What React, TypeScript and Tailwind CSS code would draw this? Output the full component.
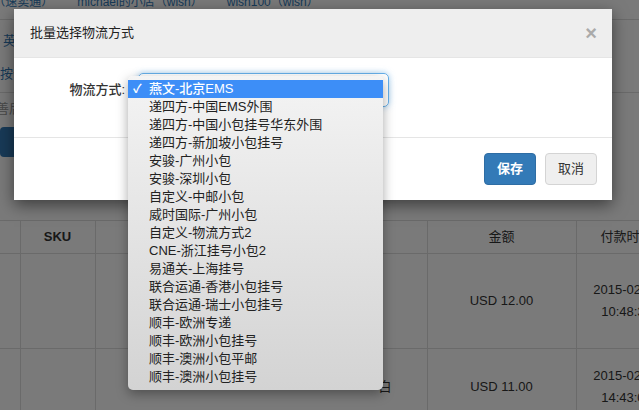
import React from "react";

const OPTIONS = [
  "燕文-北京EMS",
  "递四方-中国EMS外围",
  "递四方-中国小包挂号华东外围",
  "递四方-新加坡小包挂号",
  "安骏-广州小包",
  "安骏-深圳小包",
  "自定义-中邮小包",
  "威时国际-广州小包",
  "自定义-物流方式2",
  "CNE-浙江挂号小包2",
  "易通关-上海挂号",
  "联合运通-香港小包挂号",
  "联合运通-瑞士小包挂号",
  "顺丰-欧洲专递",
  "顺丰-欧洲小包挂号",
  "顺丰-澳洲小包平邮",
  "顺丰-澳洲小包挂号",
];

function PageBehind() {
  return (
    <div className="flex h-full flex-col bg-white text-[13px] text-[#333]">
      {/* store tabs, cut off at the top */}
      <div className="h-[20px] shrink-0 overflow-hidden border-b border-[#ddd]">
        <div className="-mt-[7px] flex gap-[24px] whitespace-nowrap text-[12px] text-[#337ab7]">
          <span className="-ml-[20px]">07（速卖通）</span>
          <span>michael的小店（wish）</span>
          <span>wish100（wish）</span>
        </div>
      </div>

      <div className="flex h-[200px] shrink-0 flex-col">
        <div className="mt-[11px] pl-[3px] text-[#337ab7]">英</div>
        <div className="mt-[13px] text-[#337ab7]">按付</div>
        <div className="mt-[9px] border-t border-[#ddd]" />
        <div className="mt-[6px] -ml-[4px] text-[#999]">善后</div>
        <div className="mt-[8px] h-[30px] w-[60px] rounded-[4px] bg-[#337ab7]" />
      </div>

      <table className="w-[700px] shrink-0 table-fixed border-collapse">
        <colgroup>
          <col className="w-[20px]" />
          <col className="w-[75px]" />
          <col className="w-[332px]" />
          <col className="w-[149px]" />
          <col className="w-[124px]" />
        </colgroup>
        <thead>
          <tr className="h-[33px] border-y border-[#ddd]">
            <th className="border-r border-[#ddd]" />
            <th className="border-r border-[#ddd] font-bold">SKU</th>
            <th className="border-r border-[#ddd]" />
            <th className="border-r border-[#ddd] font-normal">金额</th>
            <th className="whitespace-nowrap pl-[24px] text-left font-normal">付款时间</th>
          </tr>
        </thead>
        <tbody>
          <tr className="h-[95px] border-b border-[#ddd]">
            <td className="border-r border-[#ddd]" />
            <td className="border-r border-[#ddd]" />
            <td className="border-r border-[#ddd]" />
            <td className="border-r border-[#ddd] text-center">USD 12.00</td>
            <td className="pl-[10px] text-center leading-[22px]">
              <div className="w-[80px]">2015-02-12</div>
              <div className="w-[80px]">10:48:33</div>
            </td>
          </tr>
          <tr className="h-[76px]">
            <td className="border-r border-[#ddd]" />
            <td className="border-r border-[#ddd]" />
            <td className="border-r border-[#ddd] pr-[35px] text-right">白</td>
            <td className="border-r border-[#ddd] text-center">USD 11.00</td>
            <td className="pl-[10px] text-center leading-[22px]">
              <div className="w-[80px]">2015-02-12</div>
              <div className="w-[80px]">14:43:07</div>
            </td>
          </tr>
        </tbody>
      </table>
    </div>
  );
}

function Modal() {
  return (
    <div className="absolute left-[14px] top-[9px] flex h-[191px] w-[598px] flex-col overflow-hidden bg-white shadow-[0_5px_15px_rgba(0,0,0,0.5)]">
      <div className="flex h-[49px] shrink-0 items-center justify-between border-b border-[#e5e5e5] bg-[#eeeeee] pl-[16px] pr-[15px]">
        <span className="text-[13px] text-[#222]">批量选择物流方式</span>
        <span className="text-[20px] font-bold leading-none text-[#aaa]">×</span>
      </div>

      <div className="flex h-[79px] shrink-0 items-start pt-[15px]">
        <label className="flex h-[34px] w-[113px] items-center justify-end pr-[2px] text-[13px] font-medium text-[#333]">
          物流方式:
        </label>
        <div className="ml-[11px] flex h-[34px] w-[251px] items-center justify-end rounded-[5px] border border-[#66afe9] pr-[4px] shadow-[0_0_6px_rgba(102,175,233,0.6)]">
          <span className="text-[9px] leading-none text-[#555]">⇕</span>
        </div>
      </div>

      <div className="flex flex-1 items-start justify-end gap-[9px] border-t border-[#e5e5e5] pr-[15px] pt-[15px]">
        <button className="h-[32px] w-[52px] rounded-[4px] border border-[#2e6da4] bg-[#337ab7] text-[13px] font-bold text-white">
          保存
        </button>
        <button className="h-[32px] w-[52px] rounded-[4px] border border-[#d4d4d4] bg-[#efefef] text-[13px] text-[#333]">
          取消
        </button>
      </div>
    </div>
  );
}

function OptionMenu() {
  return (
    <div className="absolute left-[128px] top-[76px] flex w-[255px] flex-col rounded-[5px] bg-gradient-to-b from-[#f4f4f4] to-[#d3d3d3] py-[4px] shadow-[0_4px_12px_rgba(0,0,0,0.35)]">
      {OPTIONS.map((o, i) => (
        <div
          key={o}
          className={
            i === 0
              ? "flex h-[18px] items-center bg-[#3d8ef7] text-[13px] font-medium text-white"
              : "flex h-[18px] items-center text-[13px] text-[#222]"
          }
        >
          <span className="w-[21px] pl-[5px] text-[12px] font-bold">{i === 0 ? "✓" : ""}</span>
          <span className="whitespace-nowrap">{o}</span>
        </div>
      ))}
    </div>
  );
}

export default function App() {
  return (
    <div className="relative h-[410px] w-[639px] overflow-hidden font-['Liberation_Sans','Noto_Sans_CJK_SC',sans-serif]">
      <PageBehind />
      <div className="absolute inset-0 bg-black/[0.52]" />
      <Modal />
      <OptionMenu />
    </div>
  );
}
